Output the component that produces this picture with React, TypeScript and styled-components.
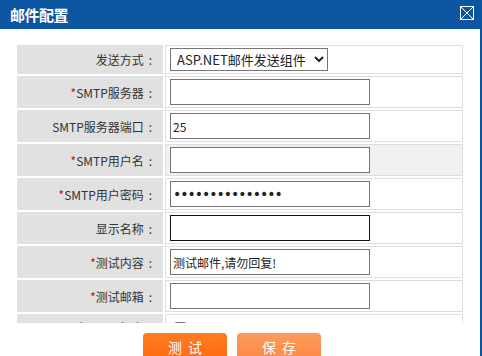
import React, { FC, ReactElement } from 'react';
import styled, { createGlobalStyle } from 'styled-components';

const GlobalStyle = createGlobalStyle`
  html, body {
    margin: 0;
    padding: 0;
    background: #fff;
  }
  body {
    font-family: "Noto Sans CJK SC", "Liberation Sans", sans-serif;
  }
`;

const Dialog = styled.div`
  width: 482px;
  height: 356px;
  overflow: hidden;
  display: flex;
  flex-direction: column;
  background: #fff;
`;

const TitleBar = styled.div`
  height: 29px;
  flex: none;
  background: #0b55a1;
  display: flex;
  align-items: center;
  justify-content: space-between;
  padding: 0 8px 0 10px;
`;

const Title = styled.h1`
  margin: 0;
  color: #fff;
  font-size: 15px;
  font-weight: bold;
  line-height: 29px;
  letter-spacing: -0.5px;
`;

const CloseButton = styled.button`
  width: 14px;
  height: 14px;
  padding: 0;
  margin-top: -4px;
  border: none;
  background: none;
  display: block;
  cursor: pointer;
`;

const Frame = styled.div`
  flex: 1;
  display: flex;
  flex-direction: column;
  border-right: 2px solid #0b55a1;
`;

const Scroller = styled.div`
  height: 294px;
  overflow: hidden;
  padding: 14px 0 0 15px;
  box-sizing: border-box;
`;

const Table = styled.table`
  border-collapse: separate;
  border-spacing: 2px;
  font-size: 12px;
  color: #333;
`;

const LabelCell = styled.td`
  width: 140px;
  background: #e1e1e1;
  text-align: right;
  padding: 0 6px 0 0;
  white-space: nowrap;
`;

const Colon = styled.span`
  display: inline-block;
  width: 1.1em;
  text-align: center;
`;

const ValueCell = styled.td<{ $hover?: boolean }>`
  width: 288px;
  border: 1px solid #dddddd;
  background: ${(p) => (p.$hover ? '#f1f1f1' : '#fff')};
  padding: 2px 4px;
`;

const Star = styled.span`
  color: #e60000;
`;

const TextInput = styled.input`
  display: block;
  box-sizing: border-box;
  width: 200px;
  height: 26px;
  margin: 0;
  padding: 0 2px;
  border: 1px solid #767676;
  border-radius: 0;
  font-family: "Noto Sans CJK SC", "Liberation Sans", sans-serif;
  font-size: 12px;
  color: #222;
  background: #fff;
  outline: none;

  &[type='password'] {
    font-family: "DejaVu Sans", sans-serif;
    font-size: 14px;
    letter-spacing: -1px;
  }

  &:focus {
    border-color: #111;
  }
`;

const Select = styled.select`
  display: block;
  box-sizing: border-box;
  width: 158px;
  height: 23px;
  margin: 0;
  padding: 0 0 0 2px;
  border: 1px solid #767676;
  border-radius: 0;
  font-family: "Noto Sans CJK SC", "Liberation Sans", sans-serif;
  font-size: 13px;
  color: #222;
  background: #fff;
`;

const Check = styled.input`
  margin: 5px 0 0 4px;
  width: 13px;
  height: 13px;
`;

const Actions = styled.div`
  display: flex;
  gap: 10px;
  padding: 10px 0 0 143px;
`;

const ActionButton = styled.button<{ $light?: boolean }>`
  width: 84px;
  height: 28px;
  border: none;
  border-radius: 4px 4px 0 0;
  background: ${(p) =>
    p.$light
      ? 'linear-gradient(#fd9b5c, #fb8a45)'
      : 'linear-gradient(#ff7d22, #ff6a0c)'};
  color: #fff;
  font-family: "Noto Sans CJK SC", sans-serif;
  font-size: 14px;
  letter-spacing: 6px;
  text-indent: 6px;
  line-height: 28px;
  padding: 0;
  cursor: pointer;
`;

interface Field {
  label: string;
  required?: boolean;
  hover?: boolean;
  control: ReactElement;
}

const fields: Field[] = [
  {
    label: '发送方式',
    control: (
      <Select defaultValue="aspnet">
        <option value="aspnet">ASP.NET邮件发送组件</option>
      </Select>
    ),
  },
  { label: 'SMTP服务器', required: true, control: <TextInput type="text" /> },
  { label: 'SMTP服务器端口', control: <TextInput type="text" defaultValue="25" /> },
  { label: 'SMTP用户名', required: true, hover: true, control: <TextInput type="text" /> },
  {
    label: 'SMTP用户密码',
    required: true,
    control: <TextInput type="password" defaultValue="abcdefghijklmno" />,
  },
  { label: '显示名称', control: <TextInput type="text" autoFocus /> },
  {
    label: '测试内容',
    required: true,
    control: <TextInput type="text" defaultValue="测试邮件,请勿回复!" />,
  },
  { label: '测试邮箱', required: true, control: <TextInput type="text" /> },
  { label: '启用SSL加密', control: <Check type="checkbox" /> },
];

const App: FC = (): ReactElement => {
  return (
    <>
      <GlobalStyle />
      <Dialog>
        <TitleBar>
          <Title>邮件配置</Title>
          <CloseButton aria-label="关闭">
            <svg width="14" height="14" viewBox="0 0 14 14">
              <rect x="0.5" y="0.5" width="13" height="13" fill="none" stroke="#fff" strokeWidth="1" />
              <path d="M1 1L13 13M13 1L1 13" stroke="#fff" strokeWidth="1" />
            </svg>
          </CloseButton>
        </TitleBar>
        <Frame>
          <Scroller>
            <Table>
              <tbody>
                {fields.map((f) => (
                  <tr key={f.label}>
                    <LabelCell>
                      {f.required && <Star>*</Star>}
                      {f.label}
                      <Colon>:</Colon>
                    </LabelCell>
                    <ValueCell $hover={f.hover}>{f.control}</ValueCell>
                  </tr>
                ))}
              </tbody>
            </Table>
          </Scroller>
          <Actions>
            <ActionButton>测试</ActionButton>
            <ActionButton $light>保存</ActionButton>
          </Actions>
        </Frame>
      </Dialog>
    </>
  );
};

export default App;
